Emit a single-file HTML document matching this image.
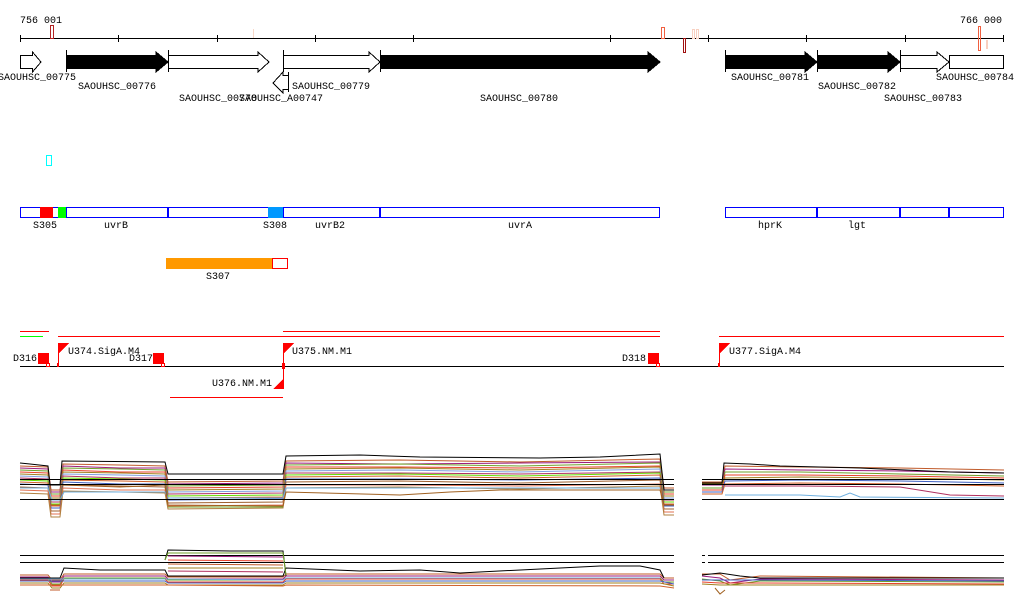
<!DOCTYPE html>
<html><head><meta charset="utf-8"><style>
html,body{margin:0;padding:0;background:#fff;width:1024px;height:611px;overflow:hidden}
svg{display:block}
text{font-family:"Liberation Mono","DejaVu Sans Mono",monospace;font-size:10px;fill:#000}
</style></head><body>
<svg width="1024" height="611" viewBox="0 0 1024 611" xmlns="http://www.w3.org/2000/svg" shape-rendering="crispEdges">
<!-- ruler -->
<text x="20" y="23">756 001</text>
<text x="960" y="23">766 000</text>
<line x1="20" y1="38.5" x2="1004" y2="38.5" stroke="#000"/>
<g stroke="#000">
<line x1="20.5" y1="35" x2="20.5" y2="42"/><line x1="118.5" y1="35" x2="118.5" y2="42"/><line x1="217.5" y1="35" x2="217.5" y2="42"/><line x1="315.5" y1="35" x2="315.5" y2="42"/><line x1="413.5" y1="35" x2="413.5" y2="42"/><line x1="610.5" y1="35" x2="610.5" y2="42"/><line x1="708.5" y1="35" x2="708.5" y2="42"/><line x1="806.5" y1="35" x2="806.5" y2="42"/><line x1="905.5" y1="35" x2="905.5" y2="42"/><line x1="1003.5" y1="35" x2="1003.5" y2="42"/>
</g>
<rect x="50.5" y="25.5" width="3" height="13" fill="none" stroke="#b22222"/>
<rect x="253" y="29" width="1" height="9" fill="#f8d8c8"/>
<rect x="661.5" y="27.5" width="3" height="11" fill="none" stroke="#f06040"/>
<rect x="683.5" y="38.5" width="2" height="14" fill="none" stroke="#a01010"/>
<rect x="692.5" y="29.5" width="2" height="9" fill="none" stroke="#f8d0c0"/>
<rect x="696.5" y="29.5" width="2" height="9" fill="none" stroke="#f8d0c0"/>
<rect x="978.5" y="26.5" width="2" height="24" fill="none" stroke="#f06040"/>
<rect x="986" y="40" width="2" height="9" fill="#f8d0c0"/>
<!-- genes -->
<g stroke="#000" stroke-width="1">
<polygon points="20.5,55.5 32.5,55.5 32.5,52 41,62 32.5,72 32.5,68.5 20.5,68.5" fill="#fff"/>
<polygon points="66.5,55.5 156,55.5 156,52 168,62 156,72 156,68.5 66.5,68.5" fill="#000"/>
<line x1="66.5" y1="50" x2="66.5" y2="72"/>
<polygon points="168.5,55.5 258,55.5 258,52 269,62 258,72 258,68.5 168.5,68.5" fill="#fff"/>
<line x1="168.5" y1="50" x2="168.5" y2="72"/>
<polygon points="283.5,55.5 369,55.5 369,52 380,62 369,72 369,68.5 283.5,68.5" fill="#fff"/>
<line x1="283.5" y1="50" x2="283.5" y2="72"/>
<polygon points="380.5,55.5 648,55.5 648,52 660,62 648,72 648,68.5 380.5,68.5" fill="#000"/>
<line x1="380.5" y1="50" x2="380.5" y2="72"/>
<polygon points="288.5,75.5 283,75.5 283,72 273,83 283,93 283,89.5 288.5,89.5" fill="#fff"/>
<line x1="288.5" y1="72" x2="288.5" y2="92"/>
<polygon points="725.5,55.5 805,55.5 805,52 817,62 805,72 805,68.5 725.5,68.5" fill="#000"/>
<line x1="725.5" y1="50" x2="725.5" y2="72"/>
<polygon points="817.5,55.5 888,55.5 888,52 900,62 888,72 888,68.5 817.5,68.5" fill="#000"/>
<line x1="817.5" y1="50" x2="817.5" y2="72"/>
<polygon points="900.5,55.5 937,55.5 937,52 949,62 937,72 937,68.5 900.5,68.5" fill="#fff"/>
<line x1="900.5" y1="50" x2="900.5" y2="72"/>
<rect x="949.5" y="55.5" width="54" height="13" fill="#fff"/>
</g>
<text x="-2" y="80">SAOUHSC_00775</text>
<text x="78" y="89">SAOUHSC_00776</text>
<text x="179" y="101">SAOUHSC_00778</text>
<text x="239" y="101">SAOUHSC_A00747</text>
<text x="292" y="89">SAOUHSC_00779</text>
<text x="480" y="101">SAOUHSC_00780</text>
<text x="731" y="80">SAOUHSC_00781</text>
<text x="818" y="89">SAOUHSC_00782</text>
<text x="884" y="101">SAOUHSC_00783</text>
<text x="936" y="80">SAOUHSC_00784</text>
<rect x="46.5" y="155.5" width="5" height="10" fill="none" stroke="#00ffff"/>
<!-- blue track -->
<g stroke="#0000ff" fill="#fff">
<rect x="20.5" y="207.5" width="639" height="10"/>
<rect x="725.5" y="207.5" width="278" height="10"/>
</g>
<rect x="40" y="207" width="13" height="11" fill="#ff0000"/>
<rect x="58" y="207" width="8" height="11" fill="#00ff00"/>
<rect x="268" y="207" width="15" height="11" fill="#0099ff"/>
<g fill="#0000ff">
<rect x="66" y="207" width="1" height="11"/><rect x="167" y="207" width="2" height="11"/><rect x="283" y="207" width="1" height="11"/><rect x="379" y="207" width="2" height="11"/>
<rect x="816" y="207" width="2" height="11"/><rect x="899" y="207" width="2" height="11"/><rect x="948" y="207" width="2" height="11"/>
</g>
<text x="33" y="228">S305</text><text x="104" y="228">uvrB</text><text x="263" y="228">S308</text><text x="315" y="228">uvrB2</text><text x="508" y="228">uvrA</text><text x="758" y="228">hprK</text><text x="848" y="228">lgt</text>
<rect x="166" y="258" width="106" height="11" fill="#ff9900"/>
<rect x="272.5" y="258.5" width="15" height="10" fill="#fff" stroke="#ff0000"/>
<text x="206" y="279">S307</text>
<!-- promoter / terminator track -->
<g stroke-width="1">
<line x1="20" y1="331.5" x2="49" y2="331.5" stroke="#ff0000"/>
<line x1="20" y1="336.5" x2="43" y2="336.5" stroke="#00ff00"/>
<line x1="283" y1="331.5" x2="660" y2="331.5" stroke="#ff0000"/>
<line x1="58" y1="336.5" x2="660" y2="336.5" stroke="#ff0000"/>
<line x1="719" y1="336.5" x2="1004" y2="336.5" stroke="#ff0000"/>
<line x1="170" y1="397.5" x2="283" y2="397.5" stroke="#ff0000"/>
<line x1="20" y1="366.5" x2="1004" y2="366.5" stroke="#000"/>
</g>
<g fill="#ff0000">
<rect x="38" y="353" width="11" height="11"/><rect x="153" y="353" width="11" height="11"/><rect x="648" y="353" width="11" height="11"/>
<rect x="58" y="343" width="1" height="23"/><polygon points="58,343 69,343 58,354"/>
<rect x="283" y="343" width="1" height="23"/><polygon points="283,343 294,343 283,354"/>
<rect x="719" y="343" width="1" height="23"/><polygon points="719,343 730,343 719,354"/>
<rect x="283" y="366" width="1" height="23"/><polygon points="284,378 284,389 273,389"/>
<rect x="57" y="363" width="2" height="4"/><rect x="282" y="363" width="3" height="6"/><rect x="718" y="363" width="2" height="4"/>
</g>
<g fill="none" stroke="#ff0000">
<rect x="46.5" y="363.5" width="3" height="3"/><rect x="161.5" y="363.5" width="3" height="3"/><rect x="656.5" y="363.5" width="3" height="3"/>
</g>
<text x="13" y="361">D316</text><text x="68" y="354">U374.SigA.M4</text><text x="129" y="361">D317</text><text x="292" y="354">U375.NM.M1</text><text x="622" y="361">D318</text><text x="729" y="354">U377.SigA.M4</text><text x="212" y="386">U376.NM.M1</text>
<!-- expression panel 1 -->
<g fill="none" stroke-width="1" shape-rendering="auto">
<g id="p1">
<polyline stroke="#c05a2a" points="20,466 48,467 51,490 60,490 63,464 120,465 165,466 168,482 283,481 286,461 400,460 520,462 660,459 664,488 674,488"/>
<polyline stroke="#9b1b7c" transform="translate(0,2)" points="20,466 48,467 51,490 60,490 63,464 120,466 165,466 168,482 283,481 286,461 400,462 520,461 660,460 664,488 674,488"/>
<polyline stroke="#6fa02a" transform="translate(0,4)" points="20,466 48,467 51,490 60,490 63,464 120,465 165,466 168,482 283,481 286,461 400,460 520,462 660,459 664,488 674,488"/>
<polyline stroke="#e8412a" transform="translate(0,6)" points="20,466 48,467 51,490 60,490 63,464 120,466 165,466 168,482 283,481 286,461 400,461 520,462 660,460 664,488 674,488"/>
<polyline stroke="#a08020" transform="translate(0,8)" points="20,466 48,467 51,490 60,490 63,464 120,465 165,466 168,482 283,481 286,461 400,460 520,462 660,459 664,488 674,488"/>
<polyline stroke="#80a0e0" transform="translate(0,10)" points="20,466 48,467 51,490 60,490 63,464 120,465 165,466 168,482 283,481 286,461 400,460 520,462 660,459 664,488 674,488"/>
<polyline stroke="#b03060" transform="translate(0,12)" points="20,466 48,467 51,490 60,490 63,464 120,466 165,466 168,482 283,481 286,461 400,461 520,462 660,460 664,488 674,488"/>
<polyline stroke="#66dd00" transform="translate(0,14)" points="20,466 48,467 51,490 60,490 63,464 120,465 165,466 168,482 283,481 286,461 400,460 520,462 660,459 664,488 674,488"/>
<polyline stroke="#d0602a" transform="translate(0,16)" points="20,466 48,467 51,490 60,490 63,464 120,465 165,466 168,482 283,481 286,461 400,460 520,462 660,459 664,488 674,488"/>
<polyline stroke="#4060c0" transform="translate(0,18)" points="20,466 48,467 51,490 60,490 63,464 120,466 165,466 168,482 283,481 286,461 400,461 520,462 660,460 664,488 674,488"/>
<polyline stroke="#a06030" transform="translate(0,21)" points="20,466 48,467 51,490 60,490 63,464 120,465 165,466 168,482 283,481 286,461 400,460 520,462 660,459 664,488 674,488"/>
<polyline stroke="#e07050" transform="translate(0,24)" points="20,466 48,467 51,490 60,490 63,464 120,466 165,466 168,482 283,481 286,461 400,461 520,462 660,460 664,488 674,488"/>
<polyline stroke="#b08040" transform="translate(0,27)" points="20,466 48,467 51,490 60,490 63,464 120,465 165,466 168,482 283,481 286,461 400,460 520,462 660,459 664,488 674,488"/>
</g>
<polyline stroke="#000" points="20,463 30,464 48,466 50,485 60,485 62,461 165,462 168,474 283,474 286,456 360,455 420,457 540,458 600,457 660,454 664,490 674,490"/>
<polyline stroke="#70b0e0" points="20,488 48,488 52,500 60,500 64,492 165,492 168,498 283,498 286,488 660,488"/>
<polyline stroke="#a06020" points="62,485 120,487 165,485 168,505 283,506 286,492 400,495 450,492 500,490 660,490 664,505 674,505"/>
<polyline stroke="#6fa02a" points="168,507 283,507"/>
<polyline stroke="#c05a2a" points="50,505 60,505"/>
<!-- right part -->
<polyline stroke="#c05a2a" points="702,482 722,482 725,466 800,467 900,468 1004,470"/>
<polyline stroke="#9b1b7c" points="702,485 722,485 725,469 800,470 900,471 1004,473"/>
<polyline stroke="#6fa02a" points="702,488 722,488 725,472 800,472 900,474 1004,476"/>
<polyline stroke="#e8412a" points="702,490 722,490 725,475 800,475 900,476 1004,478"/>
<polyline stroke="#a08020" points="702,484 722,484 725,478 800,477 900,478 1004,480"/>
<polyline stroke="#4060c0" points="702,492 722,492 725,481 800,480 900,481 1004,483"/>
<polyline stroke="#d0602a" points="702,494 722,494 725,484 800,483 900,484 1004,486"/>
<polyline stroke="#b03060" points="725,486 800,486 900,487 950,495 1004,496"/>
<polyline stroke="#70b0e0" points="725,495 800,495 840,497 850,493 860,497 1004,498"/>
<polyline stroke="#000" points="702,483 722,483 724,463 750,464 780,466 860,468 950,472 1004,473"/>
</g>
<g stroke="#000" fill="none">
<line x1="20" y1="479.5" x2="674" y2="479.5"/><line x1="20" y1="484.5" x2="674" y2="484.5"/><line x1="20" y1="499.5" x2="674" y2="499.5"/>
<line x1="702" y1="479.5" x2="1004" y2="479.5"/><line x1="702" y1="484.5" x2="1004" y2="484.5"/><line x1="702" y1="499.5" x2="1004" y2="499.5"/>
</g>
<!-- expression panel 2 -->
<g stroke="#000" fill="none">
<line x1="20" y1="555.5" x2="674" y2="555.5"/><line x1="20" y1="562.5" x2="674" y2="562.5"/>
<line x1="702" y1="555.5" x2="705" y2="555.5"/><line x1="708" y1="555.5" x2="1004" y2="555.5"/>
<line x1="702" y1="562.5" x2="705" y2="562.5"/><line x1="708" y1="562.5" x2="1004" y2="562.5"/>
</g>
<g fill="none" stroke-width="1" shape-rendering="auto">
<polyline stroke="#c05a2a" points="20,575 48,575 52,580 60,580 64,574 165,574 168,577 283,577 286,574 660,574 664,578 674,578"/>
<polyline stroke="#9b1b7c" points="20,577 48,577 52,582 60,582 64,576 165,576 168,579 283,579 286,576 660,576 664,580 674,580"/>
<polyline stroke="#6fa02a" points="20,578 48,578 52,584 60,584 64,578 165,578 168,580 283,580 286,578 660,578 664,582 674,582"/>
<polyline stroke="#e8412a" points="20,580 48,580 52,586 60,586 64,579 165,579 168,582 283,582 286,579 660,579 664,584 674,584"/>
<polyline stroke="#4060c0" points="20,581 165,581 168,583 283,583 286,581 660,581 674,584"/>
<polyline stroke="#a08020" points="20,583 48,583 52,588 60,588 64,583 165,583 168,585 283,585 286,583 660,583 674,586"/>
<polyline stroke="#70b0e0" points="20,579 165,579 283,580 286,578 660,578"/>
<polyline stroke="#d0602a" points="20,585 165,585 283,586 286,585 660,586 674,588"/>
<polyline stroke="#000" points="20,578 60,578 64,568 100,570 165,570 168,576 283,576 286,568 360,571 420,570 460,573 600,566 640,566 660,570 664,578"/>
<polyline stroke="#000" points="165,560 168,550 230,551 283,551 286,576"/>
<polyline stroke="#6fa02a" points="165,560 168,553 283,553 286,575"/>
<polyline stroke="#9b1b7c" points="168,556 283,557"/>
<polyline stroke="#e8412a" points="168,560 283,561"/>
<polyline stroke="#c05a2a" points="168,564 283,565"/>
<polyline stroke="#a08020" points="168,568 283,568"/>
<polyline stroke="#b03060" points="168,571 283,572"/>
<polyline stroke="#c05a2a" points="50,590 60,590"/>
<!-- right -->
<polyline stroke="#c05a2a" points="702,574 720,574 730,580 760,576 1004,578"/>
<polyline stroke="#9b1b7c" points="702,576 720,578 730,583 760,579 1004,580"/>
<polyline stroke="#6fa02a" points="702,579 720,581 730,585 760,581 1004,582"/>
<polyline stroke="#e8412a" points="702,582 720,583 760,583 1004,584"/>
<polyline stroke="#a08020" points="702,584 720,585 760,585 1004,585"/>
<polyline stroke="#4060c0" points="702,580 760,580 1004,581"/>
<polyline stroke="#000" points="702,575 720,573 740,576 760,578 1004,578"/>
<polyline stroke="#a06020" points="715,588 720,594 725,590"/>
</g>
</svg>
</body></html>
